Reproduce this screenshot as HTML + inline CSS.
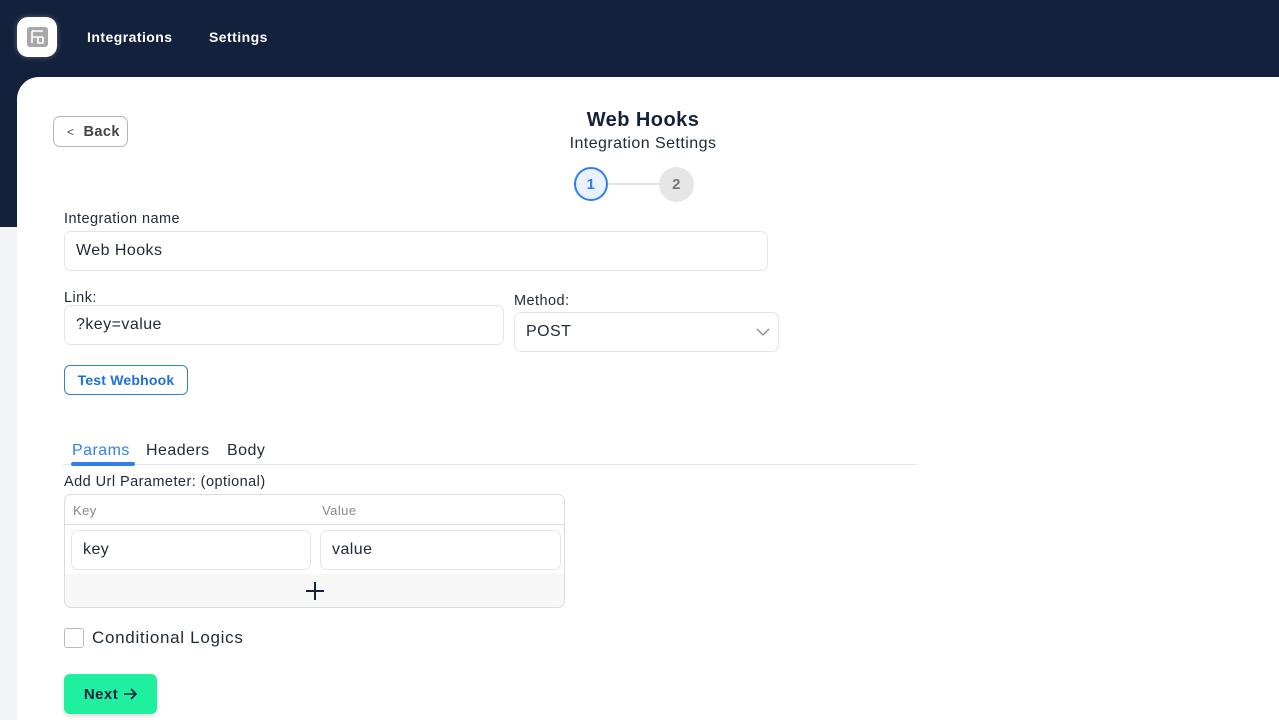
<!DOCTYPE html>
<html><head><meta charset="utf-8"><style>
*{box-sizing:border-box;margin:0;padding:0}
body{width:1279px;height:720px;overflow:hidden;background:#f3f4f6;font-family:"Liberation Sans",sans-serif;color:#1f2937;position:relative;letter-spacing:0.45px}
.top{position:absolute;left:0;top:0;width:1279px;height:227px;background:#14213d}
.logo{position:absolute;left:17px;top:17px;width:40px;height:40px;background:#fff;border-radius:11px;box-shadow:0 0 6px rgba(255,255,255,.3)}
.logo svg{position:absolute;left:10px;top:10px}
.nav{position:absolute;top:29px;color:#fff;font-weight:bold;font-size:14px}
.card{position:absolute;left:17px;top:77px;width:1262px;height:643px;background:#fff;border-top-left-radius:22px}
.abs{position:absolute}
.input{position:absolute;border:1px solid #e3e5e8;border-radius:7px;font-size:16px;padding-left:11px;display:flex;align-items:center;color:#1f2937;background:#fff}
.lbl{position:absolute;font-size:14.5px;color:#1f2937}
</style></head><body>
<div class="top"></div>
<div class="logo"><svg width="21" height="20"><rect width="21" height="20" rx="3" fill="#a8a8a8"/><path d="M5 4h11M5 4v12M5 10h11M11 10v6h5v-6" fill="none" stroke="#fff" stroke-width="1.6"/></svg></div>
<div class="nav" style="left:87px">Integrations</div>
<div class="nav" style="left:209px">Settings</div>
<div class="card"></div>
<div class="abs" style="left:53px;top:116px;width:75px;height:31px;border:1px solid #b5b5b5;border-radius:7px;font-size:14.5px;font-weight:bold;color:#444;display:flex;align-items:center;padding-left:13px"><span style="font-weight:normal;font-size:12px;margin-right:9px">&lt;</span>Back</div>
<div class="abs" style="left:523px;top:109px;width:240px;text-align:center;font-size:20px;font-weight:bold;color:#14213d">Web Hooks</div>
<div class="abs" style="left:523px;top:135px;width:240px;text-align:center;font-size:16px;color:#1f2937">Integration Settings</div>
<div class="abs" style="left:607px;top:183px;width:52px;height:2px;background:#e5e5e5"></div>
<div class="abs" style="left:574px;top:167px;width:34px;height:34px;border:2px solid #2f80ed;border-radius:50%;background:#e8f1fd;color:#2f80ed;font-weight:bold;font-size:15px;display:flex;align-items:center;justify-content:center">1</div>
<div class="abs" style="left:659px;top:167px;width:35px;height:35px;border-radius:50%;background:#e6e6e6;color:#777;font-weight:bold;font-size:15px;display:flex;align-items:center;justify-content:center">2</div>
<div class="lbl" style="left:64px;top:211px">Integration name</div>
<div class="input" style="left:64px;top:231px;width:704px;height:40px">Web Hooks</div>
<div class="lbl" style="left:64px;top:290px">Link:</div>
<div class="input" style="left:64px;top:305px;width:440px;height:40px">?key=value</div>
<div class="lbl" style="left:514px;top:293px">Method:</div>
<div class="input" style="left:514px;top:312px;width:265px;height:40px">POST<svg style="position:absolute;right:8px;top:15px" width="14" height="9"><path d="M1 1l6 6 6-6" fill="none" stroke="#888" stroke-width="1.3"/></svg></div>
<div class="abs" style="left:64px;top:365px;width:124px;height:30px;border:1px solid #2f80ed;border-radius:6px;color:#1f6fdb;font-weight:bold;font-size:14px;display:flex;align-items:center;justify-content:center;letter-spacing:0.2px">Test Webhook</div>
<div class="abs" style="left:72px;top:442px;font-size:16px;color:#2f80ed">Params</div>
<div class="abs" style="left:146px;top:442px;font-size:16px">Headers</div>
<div class="abs" style="left:227px;top:442px;font-size:16px">Body</div>
<div class="abs" style="left:63px;top:464px;width:854px;height:1px;background:#e5e7eb"></div>
<div class="abs" style="left:71px;top:462px;width:64px;height:4px;background:#2f80ed;border-radius:2px"></div>
<div class="lbl" style="left:64px;top:474px">Add Url Parameter: (optional)</div>
<div class="abs" style="left:64px;top:494px;width:501px;height:114px;border:1px solid #dcdcdc;border-radius:7px;background:#f7f7f7;overflow:hidden">
<div style="height:30px;background:#fff;border-bottom:1px solid #dcdcdc;font-size:13px;color:#888;position:relative"><span style="position:absolute;left:8px;top:8px">Key</span><span style="position:absolute;left:257px;top:8px">Value</span></div>
<div style="height:49px;background:#fff"></div>
<svg style="position:absolute;left:241px;top:87px" width="18" height="18"><path d="M9 0v18M0 9h18" stroke="#14213d" stroke-width="2"/></svg>
</div>
<div class="input" style="left:71px;top:530px;width:240px;height:40px">key</div>
<div class="input" style="left:320px;top:530px;width:241px;height:40px">value</div>
<div class="abs" style="left:64px;top:628px;width:20px;height:20px;border:1.5px solid #bbb;border-radius:3px"></div>
<div class="abs" style="left:92px;top:628px;font-size:17px;letter-spacing:0.7px">Conditional Logics</div>
<div class="abs" style="left:64px;top:674px;width:93px;height:40px;background:#1ff0a0;border-radius:6px;box-shadow:0 2px 5px rgba(0,0,0,.15);color:#14213d;font-weight:bold;font-size:15px;display:flex;align-items:center;justify-content:center">Next <svg style="margin-left:5px" width="14" height="12"><path d="M1 6h12M8 1l5 5-5 5" fill="none" stroke="#14213d" stroke-width="1.6"/></svg></div>
</body></html>
